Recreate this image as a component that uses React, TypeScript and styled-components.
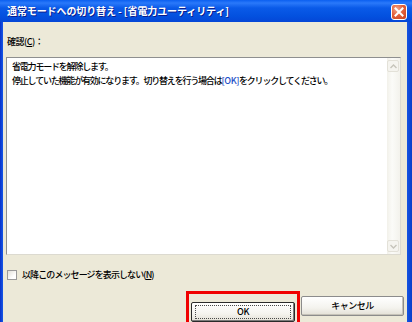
import * as React from "react";
import styled, { createGlobalStyle } from "styled-components";

const fonts = {
  UI: `"Noto Sans CJK JP", "Noto Sans", "Liberation Sans", sans-serif`,
};

const colors = {
  FACE: "#ECE9D8",
  TEXT: "#000000",
  LINK: "#1F4FC8",
  HIGHLIGHT: "#F00000",
};

const GlobalStyle = createGlobalStyle`
  html, body {
    margin: 0;
    padding: 0;
    background: ${colors.FACE};
  }
  body {
    font-family: ${fonts.UI};
    font-feature-settings: "palt";
  }
`;

const Window = styled.div`
  width: 412px;
  height: 322px;
  display: flex;
  flex-direction: column;
  background: linear-gradient(90deg, #0831c9 0, #1658e8 3px, #1658e8 406px, #0a3ec8 412px);
  overflow: hidden;
`;

const TitleBar = styled.div`
  height: 22px;
  flex: none;
  display: flex;
  align-items: center;
  justify-content: space-between;
  padding: 0 5px 0 7px;
  background: linear-gradient(180deg, #0b5ff0 0, #2a79fa 3px, #0a5ae8 8px, #0351df 16px, #0546d6 22px);
`;

const TitleText = styled.span`
  color: #ffffff;
  font: bold 10px/12px ${fonts.UI};
  letter-spacing: -0.1px;
  text-shadow: 1px 1px 0 #0a1c8c;
  white-space: nowrap;
`;

const CloseButton = styled.div`
  width: 16px;
  height: 16px;
  box-sizing: border-box;
  border: 1px solid #ffffff;
  border-radius: 3px;
  background: radial-gradient(circle at 35% 30%, #f3a78c 0, #e4623d 45%, #c9401c 100%);
  display: flex;
  align-items: center;
  justify-content: center;
  margin-top: 1px;
`;

const Client = styled.div`
  flex: 1;
  margin: 0 5px 3px 3px;
  background: ${colors.FACE};
  display: flex;
  flex-direction: column;
`;

const FieldLabel = styled.div`
  margin: 14px 0 0 4px;
  height: 12px;
  font: 500 9px/12px ${fonts.UI};
  letter-spacing: -0.5px;
  color: ${colors.TEXT};
`;

const Mnemonic = styled.span`
  text-decoration: underline;
`;

const MessageBox = styled.div`
  margin: 9px 6px 0 3px;
  height: 198px;
  box-sizing: border-box;
  display: flex;
  background: #ffffff;
  border: 1px solid;
  border-color: #8e8f8f #dcdad0 #dcdad0 #8e8f8f;
`;

const MessageText = styled.div`
  flex: 1;
  padding: 2px 5px;
  font: 500 9px/14px ${fonts.UI};
  letter-spacing: -1.2px;
  white-space: nowrap;
  color: ${colors.TEXT};
`;

const Keyword = styled.span`
  color: ${colors.LINK};
  letter-spacing: -0.4px;
`;

const ScrollTrack = styled.div`
  width: 13px;
  display: flex;
  flex-direction: column;
  justify-content: space-between;
  padding: 2px 0 2px;
  background: linear-gradient(90deg, #f2f1ea, #fbfbf8 40%, #f3f2ec);
`;

const ScrollArrow = styled.div`
  width: 12px;
  height: 12px;
  box-sizing: border-box;
  border: 1px solid #e3e1d8;
  border-radius: 2px;
  background: #f5f4ef;
  display: flex;
  align-items: center;
  justify-content: center;
`;

const CheckRow = styled.div`
  margin: 14px 0 0 4px;
  display: flex;
  align-items: center;
  gap: 5px;
  height: 12px;
`;

const CheckBox = styled.div`
  width: 10px;
  height: 10px;
  box-sizing: border-box;
  border: 1px solid #9a9a9a;
  background: linear-gradient(135deg, #e2e0d8, #ffffff 70%);
`;

const CheckLabel = styled.span`
  font: 500 9px/12px ${fonts.UI};
  letter-spacing: -0.9px;
  color: ${colors.TEXT};
`;

const ButtonRow = styled.div`
  margin: 15px 0 0 188px;
  display: flex;
  gap: 6px;
`;

const Highlight = styled.div`
  position: relative;
  &::after {
    content: "";
    position: absolute;
    inset: -5px;
    border: 3px solid ${colors.HIGHLIGHT};
    pointer-events: none;
  }
`;

const DialogButton = styled.button<{ $focused?: boolean }>`
  position: relative;
  width: ${(p) => (p.$focused ? 104 : 103)}px;
  height: 20px;
  padding: 0;
  box-sizing: border-box;
  border: 1px solid ${(p) => (p.$focused ? "#2a2a2a" : "#8c8c8c")};
  border-radius: 2px;
  background: linear-gradient(180deg, #ffffff 0, #f4f3ee 60%, #e3e0d6 100%);
  box-shadow: inset -1px -1px 0 ${(p) => (p.$focused ? "#7b7b7b" : "#c5c2b8")};
  font: 500 9px/18px ${fonts.UI};
  letter-spacing: -0.5px;
  color: ${colors.TEXT};
  text-align: center;
  &::before {
    content: "";
    display: ${(p) => (p.$focused ? "block" : "none")};
    position: absolute;
    inset: 2px 3px;
    border: 1px dotted #4a4a4a;
  }
`;

const Chevron: React.FC<{ up?: boolean }> = ({ up }) => (
  <svg width="7" height="5" viewBox="0 0 7 5">
    <path d={up ? "M0.5 4L3.5 1L6.5 4" : "M0.5 1L3.5 4L6.5 1"} fill="none" stroke="#c6c4bb" strokeWidth="1.4" />
  </svg>
);

export default function App(): JSX.Element {
  return (
    <>
      <GlobalStyle />
      <Window>
        <TitleBar>
          <TitleText>通常モードへの切り替え - [省電力ユーティリティ]</TitleText>
          <CloseButton>
            <svg width="10" height="10" viewBox="0 0 10 10">
              <path d="M1.5 1.5L8.5 8.5M8.5 1.5L1.5 8.5" stroke="#ffffff" strokeWidth="2" strokeLinecap="square" />
            </svg>
          </CloseButton>
        </TitleBar>
        <Client>
          <FieldLabel>
            確認(<Mnemonic>C</Mnemonic>)：
          </FieldLabel>
          <MessageBox>
            <MessageText>
              省電力モードを解除します。
              <br />
              停止していた機能が有効になります。切り替えを行う場合は<Keyword>[OK]</Keyword>をクリックしてください。
            </MessageText>
            <ScrollTrack>
              <ScrollArrow>
                <Chevron up />
              </ScrollArrow>
              <ScrollArrow>
                <Chevron />
              </ScrollArrow>
            </ScrollTrack>
          </MessageBox>
          <CheckRow>
            <CheckBox />
            <CheckLabel>
              以降このメッセージを表示しない(<Mnemonic>N</Mnemonic>)
            </CheckLabel>
          </CheckRow>
          <ButtonRow>
            <Highlight>
              <DialogButton $focused>OK</DialogButton>
            </Highlight>
            <DialogButton>キャンセル</DialogButton>
          </ButtonRow>
        </Client>
      </Window>
    </>
  );
}
